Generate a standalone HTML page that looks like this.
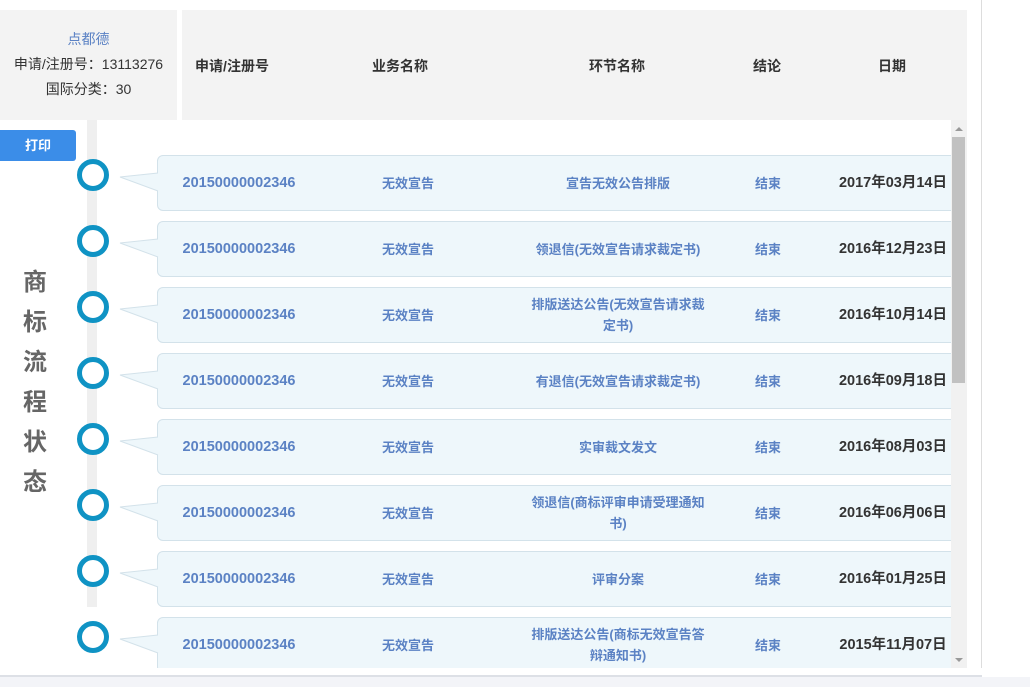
<!DOCTYPE html>
<html><head><meta charset="utf-8"><style>
body{margin:0;width:1030px;height:687px;position:relative;overflow:hidden;background:#fff;font-family:"Liberation Sans","Noto Sans CJK SC",sans-serif;}
.abs{position:absolute}
.hd{background:#f3f3f3;top:10px;height:110px}
.info{left:0;width:177px;text-align:center;font-size:14px;color:#333;line-height:25px;padding-top:17px;box-sizing:border-box}
.th{top:56px;font-size:14px;font-weight:bold;color:#333;transform:translateX(-50%)}
.row{left:157px;width:800px;height:56px;background:#eef7fb;border:1px solid #d3e2ea;border-radius:6px;box-sizing:border-box}
.c{position:absolute;top:0;height:100%;display:flex;align-items:center;justify-content:center;text-align:center;font-size:13px;font-weight:bold;color:#5b82c4;line-height:21px}
.n{font-size:14.5px}
.circ{left:77px;width:32px;height:32px;border:5px solid #0f93c4;border-radius:50%;box-sizing:border-box;background:#fff}
</style></head><body>
<div class="abs hd info">
<div style="color:#5b82c4">点都德</div>
<div>申请/注册号：13113276</div>
<div>国际分类：30</div>
</div>
<div class="abs hd" style="left:182px;width:785px"></div>
<div class="abs th" style="left:232px">申请/注册号</div>
<div class="abs th" style="left:400px">业务名称</div>
<div class="abs th" style="left:617px">环节名称</div>
<div class="abs th" style="left:767px">结论</div>
<div class="abs th" style="left:892px">日期</div>
<div class="abs" style="left:0;top:130px;width:76px;height:31px;background:#3b8de8;border-radius:0 3px 3px 0;color:#fff;font-size:13px;font-weight:bold;text-align:center;line-height:31px">打印</div>
<div class="abs" style="left:87px;top:120px;width:10px;height:487px;background:#efefef"></div>
<div class="abs" style="left:20px;top:263px;width:30px;font-size:24px;font-weight:bold;color:#666;line-height:40px;text-align:center">商<br>标<br>流<br>程<br>状<br>态</div>
<div id="rows"></div>
<svg class="abs" style="left:0;top:0" width="1030" height="687">
<g fill="#eef7fb" stroke="#d3e2ea" stroke-width="1">
<path d="M158 173 L120 177 L158 191"/><path d="M158 239 L120 243 L158 257"/><path d="M158 305 L120 309 L158 323"/><path d="M158 371 L120 375 L158 389"/><path d="M158 437 L120 441 L158 455"/><path d="M158 503 L120 507 L158 521"/><path d="M158 569 L120 573 L158 587"/><path d="M158 635 L120 639 L158 653"/>
</g></svg>
<div class="abs" style="left:951px;top:120px;width:16px;height:548px;background:#f1f1f1"></div>
<div class="abs" style="left:952px;top:137px;width:13px;height:246px;background:#c1c1c1"></div>
<div class="abs" style="left:955px;top:127px;width:0;height:0;border:4px solid transparent;border-bottom-color:#999;border-top:0"></div>
<div class="abs" style="left:955px;top:658px;width:0;height:0;border:4px solid transparent;border-top-color:#999;border-bottom:0"></div>
<div class="abs" style="left:981px;top:0;width:1px;height:676px;background:#ddd"></div>
<div class="abs" style="left:0;top:668px;width:982px;height:7px;background:#fff"></div>
<div class="abs" style="left:0;top:675px;width:982px;height:2px;background:#dde0e6"></div>
<div class="abs" style="left:0;top:677px;width:1030px;height:10px;background:#f3f4f8"></div>
<script>
var d=[["宣告无效公告排版","2017年03月14日"],["领退信(无效宣告请求裁定书)","2016年12月23日"],["排版送达公告(无效宣告请求裁<br>定书)","2016年10月14日"],["有退信(无效宣告请求裁定书)","2016年09月18日"],["实审裁文发文","2016年08月03日"],["领退信(商标评审申请受理通知<br>书)","2016年06月06日"],["评审分案","2016年01月25日"],["排版送达公告(商标无效宣告答<br>辩通知书)","2015年11月07日"]];
var h="";d.forEach(function(r,i){var t=155+i*66;
h+='<div class="abs circ" style="top:'+(t+4)+'px"></div><div class="abs row" style="top:'+t+'px">'+
'<div class="c n" style="left:0;width:162px">20150000002346</div>'+
'<div class="c" style="left:190px;width:120px">无效宣告</div>'+
'<div class="c" style="left:360px;width:200px">'+r[0]+'</div>'+
'<div class="c" style="left:580px;width:60px">结束</div>'+
'<div class="c n" style="left:672px;width:126px;color:#333">'+r[1]+'</div></div>';});
document.getElementById("rows").innerHTML=h;
</script>
</body></html>
